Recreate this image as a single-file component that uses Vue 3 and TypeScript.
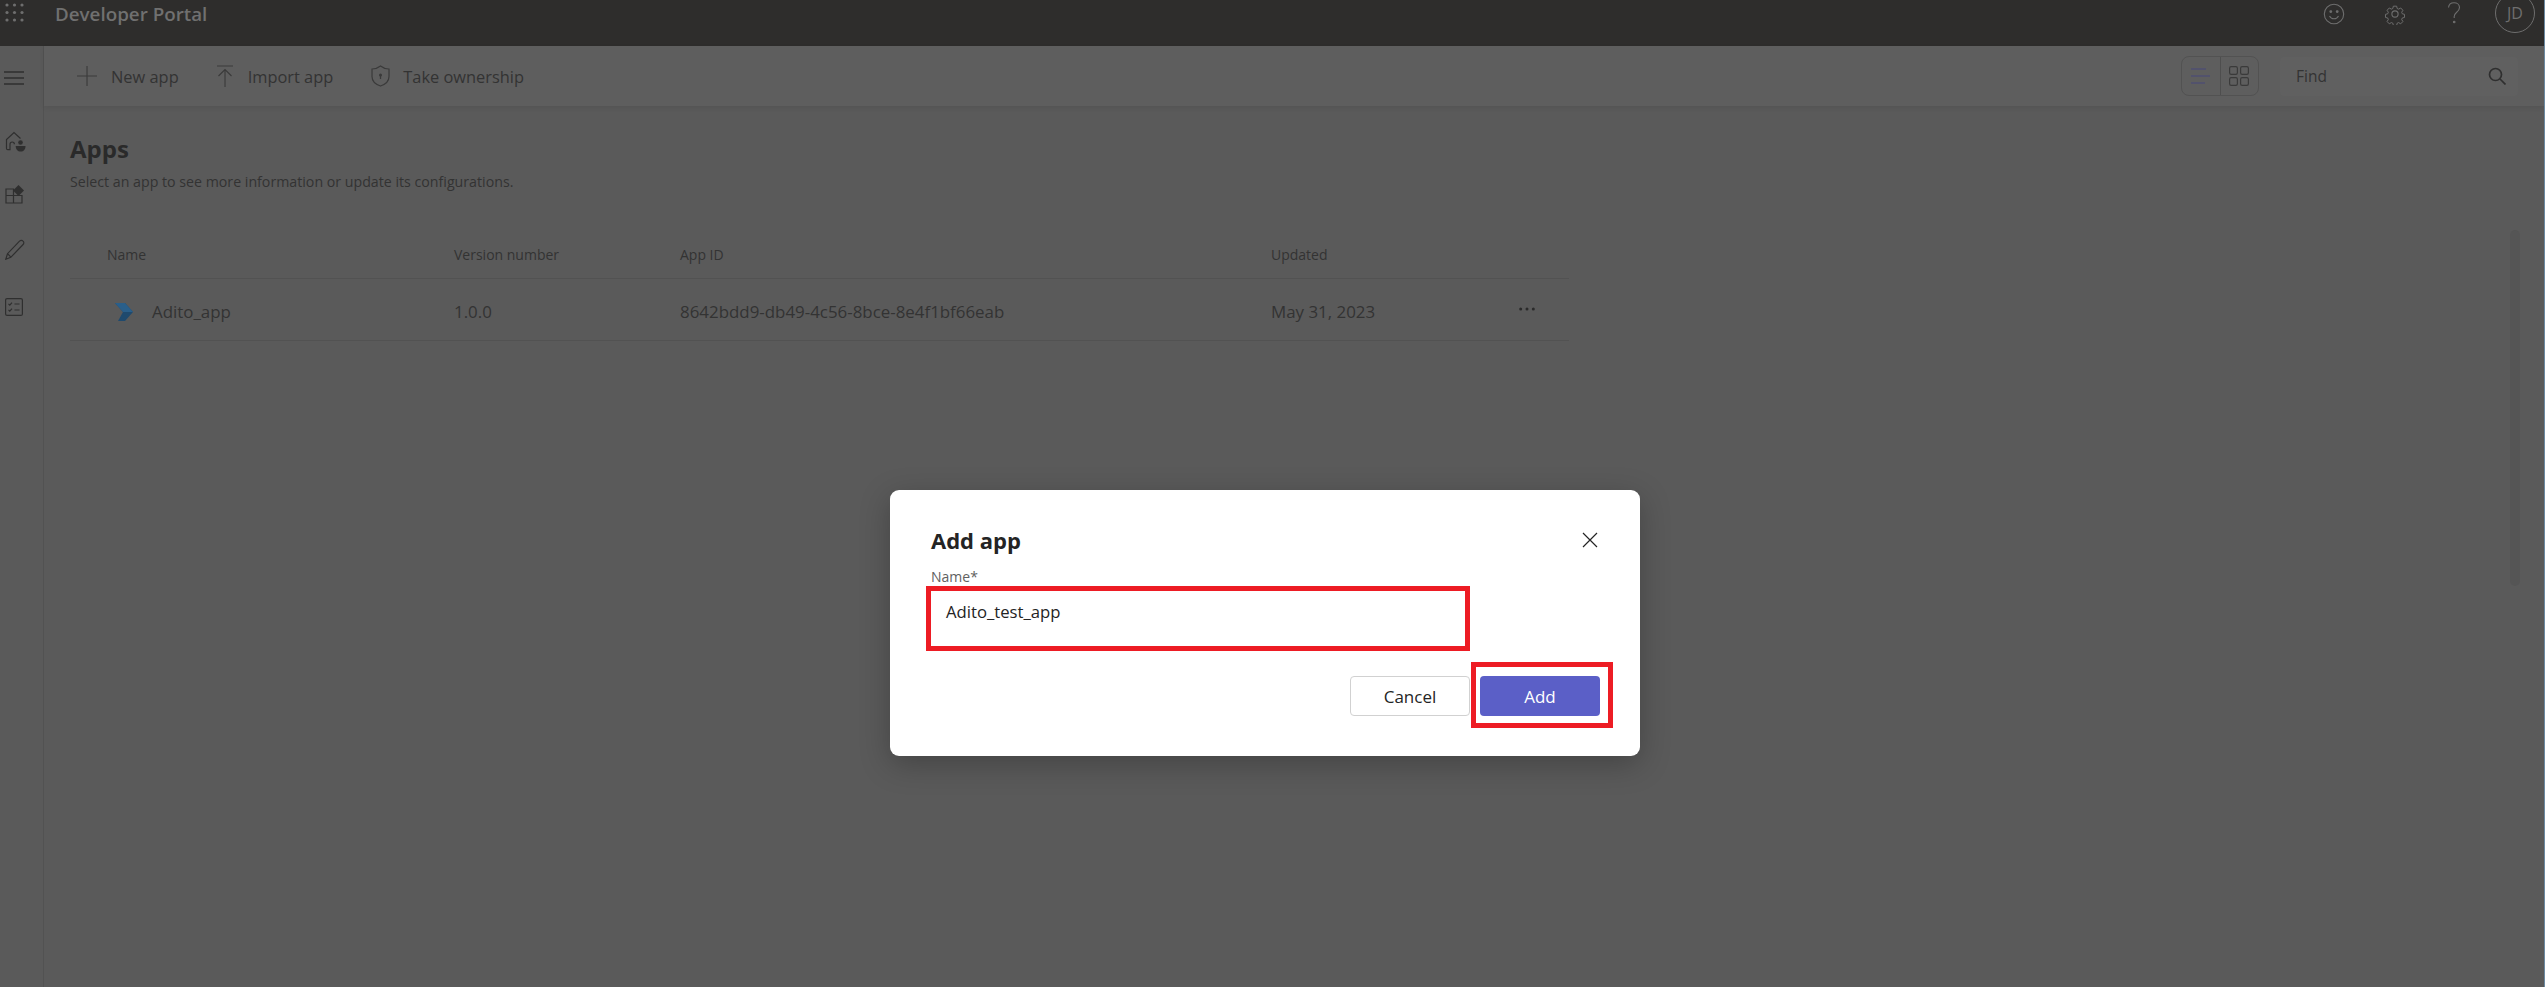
<script setup lang="ts">
const cols = [
  { label: 'Version number', value: '1.0.0', w: 226 },
  { label: 'App ID', value: '8642bdd9-db49-4c56-8bce-8e4f1bf66eab', w: 591 },
  { label: 'Updated', value: 'May 31, 2023', w: 230 },
]
const gridDots = Array.from({ length: 9 }, (_, i) => ({ cx: 2 + (i % 3) * 7.5, cy: 2 + Math.floor(i / 3) * 7.5 }))
</script>

<template>
  <div class="page">
    <header class="topbar">
      <div class="top-left">
        <svg class="grid" width="20" height="20" viewBox="0 0 20 20"><circle v-for="(d, i) in gridDots" :key="i" :cx="d.cx" :cy="d.cy" r="1.6" fill="#6e6e6e" /></svg>
        <span class="brand">Developer Portal</span>
      </div>
      <div class="top-right">
        <svg width="22" height="22" viewBox="0 0 22 22" fill="none" stroke="#6e6e6e" stroke-width="1.1"><circle cx="11" cy="11" r="9.7" /><circle cx="7.8" cy="8.6" r=".9" fill="#6e6e6e" /><circle cx="14.2" cy="8.6" r=".9" fill="#6e6e6e" /><path d="M6.5 13c1 1.9 2.6 2.8 4.5 2.8s3.500-.9 4.500-2.800" /></svg>
        <svg width="22" height="22" viewBox="0 0 24 24" fill="none" stroke="#6e6e6e" stroke-width="1.200"><circle cx="12" cy="12" r="3.400" /><path d="M10 2.500h4l.6 2.800 1.800.8 2.500-1.400 2.700 2.800-1.500 2.400.8 1.900 2.600.6v3.800l-2.600.6-.8 1.900 1.500 2.400-2.700 2.800-2.500-1.500-1.800.8-.6 2.800h-4l-.6-2.800-1.800-.8-2.500 1.500-2.700-2.800 1.500-2.400-.8-1.900-2.600-.6v-3.800l2.600-.6.800-1.900-1.500-2.400 2.700-2.800 2.500 1.400 1.800-.8z" transform="translate(1.200 1.200) scale(.9)" /></svg>
        <svg width="16" height="24" viewBox="0 0 16 24" fill="none" stroke="#6e6e6e" stroke-width="1.100"><path d="M2.500 6.500C2.800 3.500 5 1.700 8 1.700c3.200 0 5.500 2 5.500 4.800 0 2.200-1.200 3.400-2.800 4.700-1.600 1.300-2.500 2.300-2.500 4.300v1.500" /><circle cx="8.200" cy="21" r=".8" fill="#6e6e6e" /></svg>
        <div class="avatar">JD</div>
      </div>
    </header>
    <div class="body">
      <aside class="sidebar">
        <svg class="hamb" width="20" height="14" viewBox="0 0 20 14" stroke="#2f2f2f" stroke-width="1.400"><path d="M0 1h20M0 7h20M0 13h20" /></svg>
        <svg class="side-i home" width="21" height="21" viewBox="0 0 21 21" fill="none" stroke="#2f2f2f" stroke-width="1.200"><path d="M1.500 17.500V8.500L9 1.500l6.500 6M1.500 17.500c0 .8.500 1.200 1.200 1.200H5v-5.500a2.200 2.200 0 0 1 4.400 0" /><circle cx="15.500" cy="11.500" r="2.300" fill="#2f2f2f" stroke="none" /><path d="M10.700 15h9.800c0 3.500-1.800 5.500-4.800 5.500s-5-2-5-5.500z" fill="#2f2f2f" stroke="none" /></svg>
        <svg class="side-i apps" width="20" height="19" viewBox="0 0 20 19" fill="none" stroke="#2f2f2f" stroke-width="1.200"><path d="M1 4h7.500v6.500H1zM1 10.500h7.500V18H1zM8.500 10.500H17V18H8.500z" /><path d="M13.500 0l5.500 5.500-5.500 5.500L8 5.500z" fill="#2f2f2f" stroke="none" /></svg>
        <svg class="side-i pen" width="20" height="21" viewBox="0 0 20 21" fill="none" stroke="#2f2f2f" stroke-width="1.200"><path d="M.8 20.200l1.700-5.500L14.500 2.100a2.400 2.400 0 0 1 3.600 0 2.400 2.400 0 0 1 0 3.400L5.800 18.300z" /><path d="M2.800 14.800l3 3.300" /></svg>
        <svg class="side-i" width="18" height="18" viewBox="0 0 18 18" fill="none" stroke="#2f2f2f" stroke-width="1.200"><rect x=".6" y=".6" width="16.800" height="16.800" rx="1.500" /><path d="M3.500 5.800l1.300 1.300L7 4.600M3.500 11.800l1.300 1.300L7 10.600M9.500 6h5M9.500 12h5" /></svg>
      </aside>
      <main class="main">
        <div class="toolbar">
          <div class="actions">
            <button class="action first">
              <svg width="20" height="20" viewBox="0 0 20 20" stroke="#3a3a3a" stroke-width="1.100"><path d="M10 0v20M0 10h20" /></svg>
              <span>New app</span>
            </button>
            <button class="action second">
              <svg width="16" height="22" viewBox="0 0 16 22" fill="none" stroke="#3a3a3a" stroke-width="1.100"><path d="M0 1h16M8 22V4.500M1.500 11L8 4.500l6.500 6.500" /></svg>
              <span>Import app</span>
            </button>
            <button class="action third">
              <svg width="19" height="22" viewBox="0 0 19 22" fill="none" stroke="#3a3a3a" stroke-width="1.200"><path d="M9.500 1c2.500 2 5.500 3 8.500 3v7.500c0 4.500-3.400 7.800-8.500 9.500C4.400 19.300 1 16 1 11.500V4c3 0 6-1 8.500-3z" /><circle cx="9.500" cy="10" r="1.500" fill="#3a3a3a" stroke="none" /><path d="M9.500 10v4" /></svg>
              <span>Take ownership</span>
            </button>
          </div>
          <div class="tools">
            <div class="toggle">
              <div class="toggle-cell">
                <svg width="20" height="16" viewBox="0 0 20 16" stroke="#47467a" stroke-width="1.200"><path d="M0 1h15M0 8h19M0 15h14" /></svg>
              </div>
              <div class="toggle-cell divided">
                <svg width="20" height="20" viewBox="0 0 20 20" fill="none" stroke="#3a3a3a" stroke-width="1.200"><rect x=".6" y=".6" width="7.800" height="7.800" rx="1.600" /><rect x="11.600" y=".6" width="7.800" height="7.800" rx="1.600" /><rect x=".6" y="11.600" width="7.800" height="7.800" rx="1.600" /><rect x="11.600" y="11.600" width="7.800" height="7.800" rx="1.600" /></svg>
              </div>
            </div>
            <div class="search">
              <span>Find</span>
              <svg width="18" height="18" viewBox="0 0 18 18" fill="none" stroke="#2f2f2f" stroke-width="1.700"><circle cx="7.500" cy="7.500" r="6" /><path d="M12 12l5.500 5.500" /></svg>
            </div>
          </div>
        </div>
        <section class="content">
          <h1>Apps</h1>
          <p class="sub">Select an app to see more information or update its configurations.</p>
          <div class="row head">
            <div class="c-name">Name</div>
            <div v-for="c in cols" :key="c.label" :style="{ width: c.w + 'px' }">{{ c.label }}</div>
          </div>
          <div class="row data">
            <div class="c-name app">
              <svg width="19" height="18" viewBox="0 0 19 18"><path d="M0 0h10l8 9-8 9H3l5-9z" fill="#1f4a6e" /><path d="M0 0h10l8 9H8z" fill="#2a5f8a" /></svg>
              <span>Adito_app</span>
            </div>
            <div v-for="c in cols" :key="c.label" :style="{ width: c.w + 'px' }">{{ c.value }}</div>
            <svg class="more" width="16" height="4" viewBox="0 0 16 4" fill="#2a2a2a"><circle cx="1.700" cy="2" r="1.500" /><circle cx="8" cy="2" r="1.500" /><circle cx="14.300" cy="2" r="1.500" /></svg>
          </div>
        </section>
      </main>
    </div>
    <div class="thumb"></div>
    <div class="edge"></div>
    <div class="scrim">
      <div class="dialog">
        <div class="d-head">
          <h2>Add app</h2>
          <svg width="16" height="16" viewBox="0 0 16 16" stroke="#242424" stroke-width="1.200"><path d="M1 1l14 14M15 1L1 15" /></svg>
        </div>
        <label class="d-label">Name*</label>
        <div class="d-input">Adito_test_app</div>
        <div class="d-foot">
          <button class="btn cancel">Cancel</button>
          <div class="add-mark"><button class="btn add">Add</button></div>
        </div>
      </div>
    </div>
  </div>
</template>

<style>
html, body { margin: 0; padding: 0; background: #5a5a5a; overflow: hidden; }
#app { height: 987px; overflow: hidden; }
</style>

<style scoped>
.page { position: relative; width: 2545px; height: 987px; overflow: hidden; background: #5a5a5a; font-family: "Open Sans", "Noto Sans", sans-serif; color: #2f2f2f; }
.topbar { height: 46px; background: #2e2d2c; display: flex; justify-content: space-between; box-sizing: border-box; padding: 3px 10px 0 5px; }
.top-left { display: flex; align-items: flex-start; gap: 30px; }
.brand { color: #707070; font-size: 18.8px; font-weight: 600; line-height: 22px; }
.top-right { display: flex; align-items: flex-start; }
.top-right svg:nth-child(1) { margin-right: 39px; }
.top-right svg:nth-child(2) { margin-right: 40px; }
.top-right svg:nth-child(3) { margin: -2px 33px 0 0; }
.avatar { width: 40px; height: 40px; margin-top: -10px; box-sizing: border-box; border: 1px solid #6e6e6e; border-radius: 50%; color: #6e6e6e; font-size: 16px; display: flex; align-items: center; justify-content: center; }
.body { display: flex; height: 941px; }
.sidebar { width: 44px; box-sizing: border-box; border-right: 1px solid #525252; display: flex; flex-direction: column; align-items: flex-start; padding: 25px 0 0 5px; flex: none; }
.hamb { margin: 0 0 46px -1px; }
.side-i { display: block; }
.home { margin-bottom: 33px; }
.apps { margin-bottom: 35px; }
.pen { margin-bottom: 38px; }
.main { flex: 1; min-width: 0; }
.toolbar { height: 60px; background: #5e5e5e; box-shadow: 0 2px 5px rgba(0,0,0,.07); display: flex; justify-content: space-between; align-items: center; padding: 0 27px 0 33px; box-sizing: border-box; position: relative; }
.actions { display: flex; align-items: center; }
.action { background: none; border: 0; padding: 0; font: inherit; font-size: 16.4px; color: #333; display: flex; align-items: center; }
.action span { white-space: nowrap; }
.first { gap: 14px; margin-right: 38px; }
.second { gap: 15px; margin-right: 38px; }
.third { gap: 13px; }
.tools { display: flex; align-items: center; gap: 21px; }
.toggle { display: flex; height: 40px; width: 78px; box-sizing: border-box; border: 1px solid #525252; border-radius: 8px; }
.toggle-cell { flex: 1; display: flex; align-items: center; justify-content: center; }
.divided { border-left: 1px solid #4e4e4e; }
.search { width: 238px; height: 39px; background: #606060; border-radius: 4px; display: flex; align-items: center; justify-content: space-between; padding: 0 12px 0 16px; box-sizing: border-box; color: #333; font-size: 15.5px; }
.content { padding: 28px 0 0 26px; width: 1525px; box-sizing: border-box; }
h1 { margin: 0; font-size: 24px; line-height: 30px; font-weight: 700; color: #2a2a2a; }
.sub { margin: 8px 0 0; font-size: 14.2px; line-height: 20px; color: #333; }
.row { display: flex; border-bottom: 1px solid #525252; align-items: center; font-size: 14px; color: #333; position: relative; }
.head { margin-top: 45px; height: 42px; padding-bottom: 7px; box-sizing: border-box; }
.data { height: 62px; font-size: 16.9px; padding-top: 4px; box-sizing: border-box; }
.c-name { width: 384px; padding-left: 37px; box-sizing: border-box; flex: none; }
.app { display: flex; align-items: center; gap: 18px; padding-left: 45px; }
.more { position: absolute; left: 1449px; top: 28px; }
.thumb { position: absolute; left: 2510px; top: 230px; width: 10px; height: 356px; border-radius: 5px; background: #555; }
.edge { position: absolute; left: 2544px; top: 0; width: 1px; height: 987px; background: #6c8aa2; }
.scrim { position: absolute; inset: 0; display: flex; align-items: flex-start; justify-content: center; padding-top: 490px; box-sizing: border-box; pointer-events: none; }
.dialog { width: 750px; height: 266px; background: #fff; border-radius: 9px; box-shadow: 0 8px 30px rgba(0,0,0,.25); box-sizing: border-box; padding: 35px 41px 0; margin-left: -15px; flex: none; }
.d-head { display: flex; justify-content: space-between; align-items: center; height: 30px; padding-right: 1px; }
h2 { margin: 0; font-size: 22px; line-height: 30px; font-weight: 700; color: #242424; }
.d-label { display: block; margin-top: 14px; font-size: 14px; line-height: 16px; color: #616161; }
.d-input { margin: 1px 0 0 -5px; width: 544px; height: 65px; box-sizing: border-box; border: 5px solid #ed1c24; padding: 10px 15px; font-size: 16.7px; line-height: 22px; color: #242424; }
.d-foot { display: flex; justify-content: flex-end; align-items: flex-start; margin-top: 25px; margin-right: -14px; }
.btn { width: 120px; height: 40px; border-radius: 4px; font: inherit; font-size: 17px; box-sizing: border-box; padding: 0; }
.cancel { background: #fff; border: 1px solid #d1d1d1; color: #242424; font-weight: 400; margin-right: 1px; }
.add { background: #5b5fc7; border: 0; color: #fff; font-weight: 500; display: block; }
.add-mark { margin-top: -14px; box-sizing: border-box; border: 5px solid #ed1c24; width: 142px; height: 66px; padding: 9px 0 0 4px; }
</style>
